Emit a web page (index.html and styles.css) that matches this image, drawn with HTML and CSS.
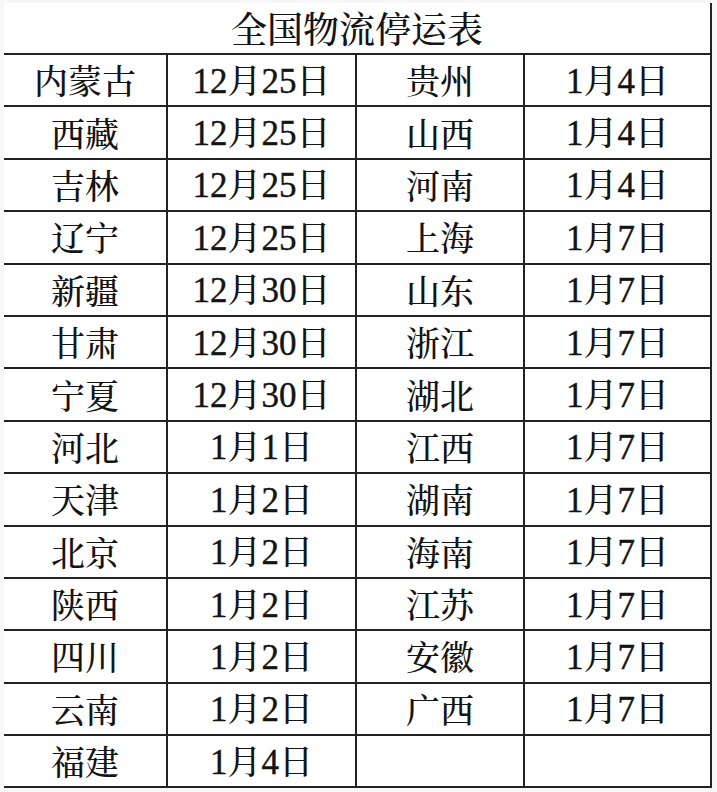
FILE: index.html
```html
<!DOCTYPE html>
<html lang="zh-CN">
<head>
<meta charset="utf-8">
<title>全国物流停运表</title>
<link rel="stylesheet" href="styles.css">
</head>
<body>
<table class="sheet">
  <colgroup>
    <col class="c1"><col class="c2"><col class="c3"><col class="c4">
  </colgroup>
  <thead>
    <tr class="title-row"><th colspan="4" class="title">全国物流停运表</th></tr>
  </thead>
  <tbody>
    <tr><td>内蒙古</td><td><span class="n">12</span>月<span class="n">25</span>日</td><td>贵州</td><td><span class="n">1</span>月<span class="n">4</span>日</td></tr>
    <tr><td>西藏</td><td><span class="n">12</span>月<span class="n">25</span>日</td><td>山西</td><td><span class="n">1</span>月<span class="n">4</span>日</td></tr>
    <tr><td>吉林</td><td><span class="n">12</span>月<span class="n">25</span>日</td><td>河南</td><td><span class="n">1</span>月<span class="n">4</span>日</td></tr>
    <tr><td>辽宁</td><td><span class="n">12</span>月<span class="n">25</span>日</td><td>上海</td><td><span class="n">1</span>月<span class="n">7</span>日</td></tr>
    <tr><td>新疆</td><td><span class="n">12</span>月<span class="n">30</span>日</td><td>山东</td><td><span class="n">1</span>月<span class="n">7</span>日</td></tr>
    <tr><td>甘肃</td><td><span class="n">12</span>月<span class="n">30</span>日</td><td>浙江</td><td><span class="n">1</span>月<span class="n">7</span>日</td></tr>
    <tr><td>宁夏</td><td><span class="n">12</span>月<span class="n">30</span>日</td><td>湖北</td><td><span class="n">1</span>月<span class="n">7</span>日</td></tr>
    <tr><td>河北</td><td><span class="n">1</span>月<span class="n">1</span>日</td><td>江西</td><td><span class="n">1</span>月<span class="n">7</span>日</td></tr>
    <tr><td>天津</td><td><span class="n">1</span>月<span class="n">2</span>日</td><td>湖南</td><td><span class="n">1</span>月<span class="n">7</span>日</td></tr>
    <tr><td>北京</td><td><span class="n">1</span>月<span class="n">2</span>日</td><td>海南</td><td><span class="n">1</span>月<span class="n">7</span>日</td></tr>
    <tr><td>陕西</td><td><span class="n">1</span>月<span class="n">2</span>日</td><td>江苏</td><td><span class="n">1</span>月<span class="n">7</span>日</td></tr>
    <tr><td>四川</td><td><span class="n">1</span>月<span class="n">2</span>日</td><td>安徽</td><td><span class="n">1</span>月<span class="n">7</span>日</td></tr>
    <tr><td>云南</td><td><span class="n">1</span>月<span class="n">2</span>日</td><td>广西</td><td><span class="n">1</span>月<span class="n">7</span>日</td></tr>
    <tr><td>福建</td><td><span class="n">1</span>月<span class="n">4</span>日</td><td></td><td></td></tr>
  </tbody>
</table>
</body>
</html>
```
FILE: styles.css
```css
html, body {
  margin: 0;
  padding: 0;
  background: #f7f7f7;
}
body {
  padding: 3px 0 0 4px;
  font-family: "Noto Serif CJK SC", "Noto Sans CJK SC", serif;
  color: #141414;
}
.sheet {
  border-collapse: collapse;
  table-layout: fixed;
  width: 707px;
  background: #fff;
}
.c1 { width: 163px; }
.c2 { width: 189px; }
.c3 { width: 168px; }
.c4 { width: 187px; }
.title {
  height: 50px;
  padding: 0;
  font-size: 36px;
  font-weight: 500;
  line-height: 1;
  text-align: center;
  border-right: 2px solid #222;
  border-bottom: 2px solid #222;
}
.sheet td {
  height: 50.4px;
  padding: 0;
  font-size: 34px;
  font-weight: 500;
  line-height: 1;
  text-align: center;
  border: 2px solid #222;
}
.sheet td:first-child {
  border-left: none;
}
.sheet td .n {
  font-family: "Times New Roman", Tinos, "Nimbus Roman", "Nimbus Roman No9 L", FreeSerif, "DejaVu Serif", serif;
  font-weight: normal;
  font-size: 35px;
  -webkit-text-stroke: 0.4px #141414;
}
```
